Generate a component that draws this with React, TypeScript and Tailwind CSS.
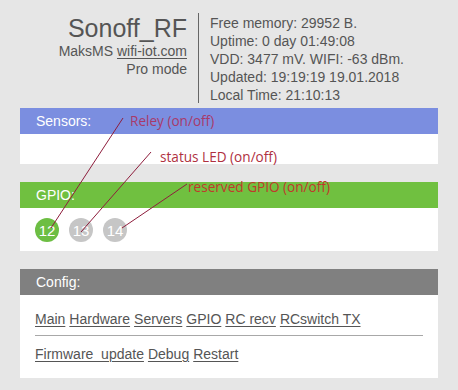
import React from "react"

const info = [
  "Free memory: 29952 B.",
  "Uptime: 0 day 01:49:08",
  "VDD: 3477 mV. WIFI: -63 dBm.",
  "Updated: 19:19:19 19.01.2018",
  "Local Time: 21:10:13",
]

const links1 = ["Main", "Hardware", "Servers", "GPIO", "RC recv", "RCswitch TX"]
const links2 = ["Firmware_update", "Debug", "Restart"]

function Link({ label }: { label: string }) {
  return (
    <a href="#" className="text-[#555] underline underline-offset-2 decoration-1">
      {label}
    </a>
  )
}

function Pin({ num, on }: { num: number; on?: boolean }) {
  return (
    <div
      className={`w-6 h-6 rounded-full flex items-center justify-center text-white text-[15px] leading-none ${
        on ? "bg-[#6dbe43]" : "bg-[#c6c6c6]"
      }`}
    >
      {num}
    </div>
  )
}

export default function App() {
  return (
    <div
      className="relative w-[458px] h-[390px] bg-[#e6e6e6] text-[#555] overflow-hidden"
      style={{ fontFamily: '"Liberation Sans", Arial, sans-serif' }}
    >
      {/* header */}
      <div className="flex pt-[13px]">
        <div className="w-[187px] text-right pt-[2px]">
          <div className="text-[25px] leading-[27px]">Sonoff_RF</div>
          <div className="text-[14px] leading-[18px]">
            MaksMS <span className="underline underline-offset-2">wifi-iot.com</span>
          </div>
          <div className="text-[14px] leading-[18px]">Pro mode</div>
        </div>
        <div className="ml-[11px] border-l border-[#666] pl-[11px] pt-px h-[90px] text-[14px] leading-[18px]">
          {info.map((line) => (
            <div key={line}>{line}</div>
          ))}
        </div>
      </div>

      <div className="mx-[20px] mt-[5px] flex flex-col">
        {/* Sensors */}
        <div className="bg-[#7b8ee0] h-[26px] leading-[26px] pl-[16px] text-white text-[14px]">Sensors:</div>
        <div className="bg-white h-[30px]" />

        {/* GPIO */}
        <div className="mt-[18px] bg-[#70c040] h-[26px] leading-[26px] pl-[16px] text-white text-[14px]">GPIO:</div>
        <div className="bg-white h-[43px] pt-[10px] pl-[15px] flex gap-[10px]">
          <Pin num={12} on />
          <Pin num={13} />
          <Pin num={14} />
        </div>

        {/* Config */}
        <div className="mt-[18px] bg-[#808080] h-[26px] leading-[26px] pl-[16px] text-white text-[14px]">Config:</div>
        <div className="bg-white px-[15px] pt-[15px] pb-[15px] text-[14px] leading-[18px]">
          <div className="flex gap-[4px]">
            {links1.map((l) => (
              <Link key={l} label={l} />
            ))}
          </div>
          <div className="mt-[7px] h-px bg-[#a8a8a8]" />
          <div className="mt-[9px] flex gap-[4px]">
            {links2.map((l) => (
              <Link key={l} label={l} />
            ))}
          </div>
        </div>
      </div>

      {/* annotations */}
      <svg className="absolute left-0 top-0 pointer-events-none" width="458" height="390">
        <line x1="123" y1="118" x2="51" y2="228" stroke="#8e1d3c" strokeWidth="1" />
        <line x1="151" y1="152" x2="81" y2="232" stroke="#8e1d3c" strokeWidth="1" />
        <line x1="187" y1="184" x2="122" y2="228" stroke="#8e1d3c" strokeWidth="1" />
      </svg>
      <div
        className="absolute left-0 top-0 w-full h-full text-[13.6px] leading-none text-[#b0303f] pointer-events-none"
        style={{ fontFamily: '"Open Sans", "DejaVu Sans", sans-serif' }}
      >
        <span className="absolute left-[130px] top-[114px] whitespace-nowrap text-[#a83a6a]">Reley (on/off)</span>
        <span className="absolute left-[160px] top-[150px] whitespace-nowrap">status LED (on/off)</span>
        <span className="absolute left-[188px] top-[180px] whitespace-nowrap text-[#c0392b]">reserved GPIO (on/off)</span>
      </div>
    </div>
  )
}
